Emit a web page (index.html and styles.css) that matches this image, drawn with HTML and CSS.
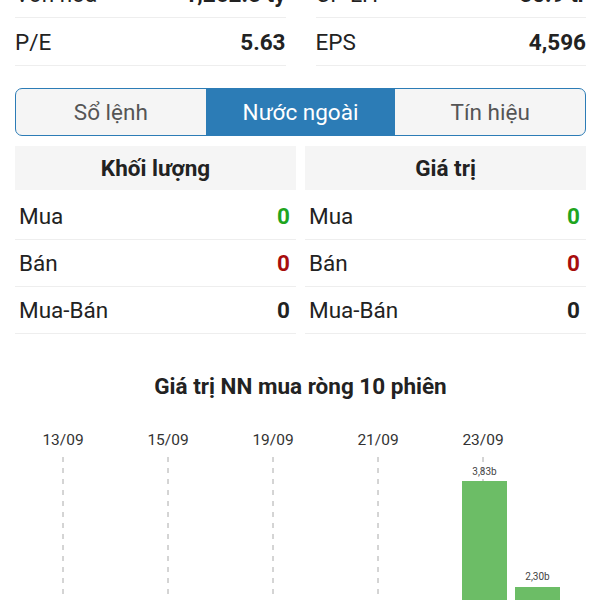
FILE: index.html
```html
<!DOCTYPE html>
<html lang="vi">
<head>
<meta charset="utf-8">
<title>Nước ngoài</title>
<link rel="stylesheet" href="styles.css">
</head>
<body>
<div class="page">
    <div class="stats">
        <div class="stat"><span>Vốn hóa</span><b>1,262.5 tỷ</b></div>
        <div class="stat"><span>CP LH</span><b>50.9 tr</b></div>
        <div class="stat"><span>P/E</span><b>5.63</b></div>
        <div class="stat"><span>EPS</span><b>4,596</b></div>
    </div>

    <div class="tabs">
        <div class="tab">Sổ lệnh</div>
        <div class="tab active">Nước ngoài</div>
        <div class="tab">Tín hiệu</div>
    </div>

    <div class="tables">
        <div class="table">
            <div class="head">Khối lượng</div>
            <div class="row"><span>Mua</span><b class="up">0</b></div>
            <div class="row"><span>Bán</span><b class="down">0</b></div>
            <div class="row"><span>Mua-Bán</span><b>0</b></div>
        </div>
        <div class="table">
            <div class="head">Giá trị</div>
            <div class="row"><span>Mua</span><b class="up">0</b></div>
            <div class="row"><span>Bán</span><b class="down">0</b></div>
            <div class="row"><span>Mua-Bán</span><b>0</b></div>
        </div>
    </div>

    <h2 class="chart-title">Giá trị NN mua ròng 10 phiên</h2>

    <svg class="chart" width="600" height="200" viewBox="0 0 600 200">
        <g class="dates">
            <text x="63" y="16">13/09</text>
            <text x="168" y="16">15/09</text>
            <text x="273" y="16">19/09</text>
            <text x="378" y="16">21/09</text>
            <text x="483" y="16">23/09</text>
        </g>
        <g class="grid">
            <line x1="63" y1="28" x2="63" y2="200"/>
            <line x1="168" y1="28" x2="168" y2="200"/>
            <line x1="273" y1="28" x2="273" y2="200"/>
            <line x1="378" y1="28" x2="378" y2="200"/>
            <line x1="483" y1="28" x2="483" y2="200"/>
        </g>
        <rect class="bar" x="462" y="52" width="45" height="148"/>
        <rect class="bar" x="515" y="158" width="45" height="42"/>
        <g class="vals">
            <text x="484.5" y="46">3,83b</text>
            <text x="537.5" y="151">2,30b</text>
        </g>
    </svg>
</div>
</body>
</html>
```

FILE: styles.css
```css
body {
    margin: 0;
    background: #fff;
    font-family: Roboto, "Noto Sans", sans-serif;
    color: #222;
    overflow: hidden;
}
.page {
    margin-top: -30px;
    padding: 0 14px 0 15px;
}

.stats {
    display: grid;
    grid-template-columns: 1fr 1fr;
    column-gap: 30px;
}
.stat {
    height: 46px;
    border-bottom: 1px solid #eeeeee;
    display: flex;
    justify-content: space-between;
    align-items: center;
    padding-top: 1px;
    font-size: 22.5px;
}
.stat b {
    font-weight: 700;
}

.tabs {
    margin-top: 22px;
    display: flex;
    height: 46px;
    border: 1px solid #2c7cb6;
    border-radius: 7px;
    overflow: hidden;
    background: #f5f5f5;
}
.tab {
    flex: 1;
    display: flex;
    align-items: center;
    justify-content: center;
    font-size: 22.5px;
    color: #555;
}
.tab.active {
    background: #2c7cb6;
    color: #fff;
}

.tables {
    margin-top: 10px;
    display: grid;
    grid-template-columns: 1fr 1fr;
    column-gap: 9px;
}
.head {
    height: 44px;
    background: #f5f5f5;
    display: flex;
    align-items: center;
    justify-content: center;
    font-size: 22.5px;
    font-weight: 700;
}
.row {
    height: 46px;
    border-bottom: 1px solid #eeeeee;
    display: flex;
    justify-content: space-between;
    align-items: center;
    padding: 0 6px 0 4px;
    font-size: 22.5px;
}
.head + .row {
    height: 50px;
    padding-top: 2px;
    box-sizing: border-box;
}
.row b {
    font-weight: 700;
}
.up {
    color: #1fa51f;
}
.down {
    color: #a80d0d;
}

.chart-title {
    margin: 39px 0 0;
    text-align: center;
    font-size: 22.5px;
    font-weight: 700;
    color: #222;
}

.chart {
    display: block;
    margin: 30px 0 0 -15px;
}
.dates text {
    font-family: Roboto, sans-serif;
    font-size: 15.5px;
    fill: #333;
    text-anchor: middle;
}
.grid line {
    stroke: #aaaaaa;
    stroke-width: 1;
    stroke-dasharray: 5 6;
}
.bar {
    fill: #6cbd66;
}
.vals text {
    font-family: Roboto, sans-serif;
    font-size: 10px;
    fill: #444;
    text-anchor: middle;
}
```
